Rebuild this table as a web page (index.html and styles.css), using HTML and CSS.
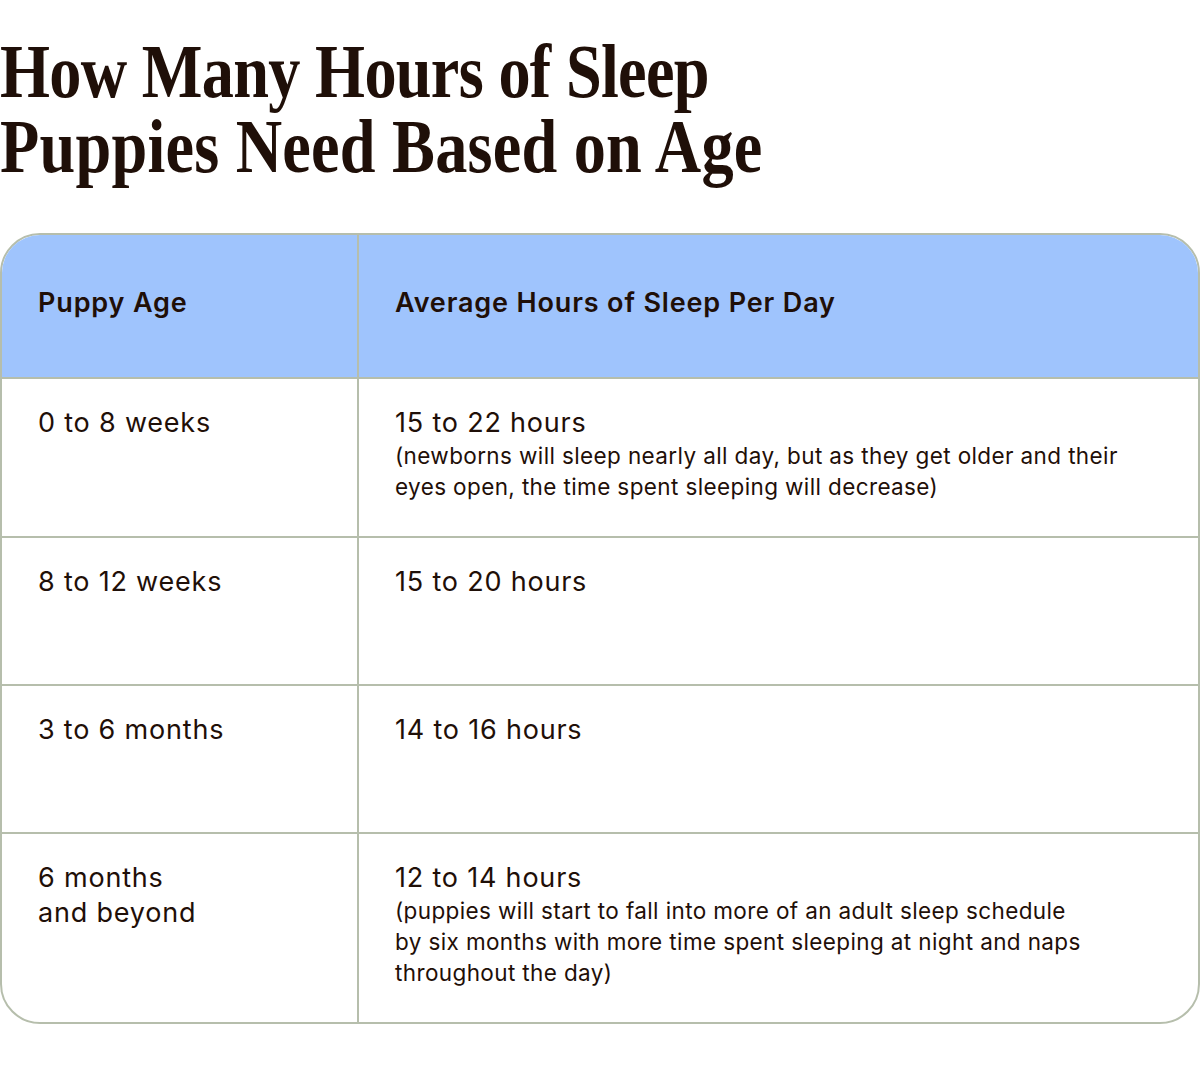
FILE: index.html
```html
<!DOCTYPE html>
<html>
<head>
<meta charset="utf-8">
<link rel="stylesheet" href="styles.css">
</head>
<body>
<div class="page">
  <h1 class="title"><span class="title-inner"><span class="line line-one">How Many Hours of Sleep</span><span class="line line-two">Puppies Need Based on Age</span></span></h1>
  <div class="table">
    <div class="cell head first">Puppy Age</div>
    <div class="cell head">Average Hours of Sleep Per Day</div>

    <div class="cell first"><div class="main">0 to 8 weeks</div></div>
    <div class="cell"><div class="main">15 to 22 hours</div><div class="sub">(newborns will sleep nearly all day, but as they get older and their<br>eyes open, the time spent sleeping will decrease)</div></div>

    <div class="cell first"><div class="main">8 to 12 weeks</div></div>
    <div class="cell"><div class="main">15 to 20 hours</div></div>

    <div class="cell first"><div class="main">3 to 6 months</div></div>
    <div class="cell"><div class="main">14 to 16 hours</div></div>

    <div class="cell first last"><div class="main">6 months<br>and beyond</div></div>
    <div class="cell last"><div class="main">12 to 14 hours</div><div class="sub">(puppies will start to fall into more of an adult sleep schedule<br>by six months with more time spent sleeping at night and naps<br>throughout the day)</div></div>
  </div>
</div>
</body>
</html>
```

FILE: styles.css
```css
html, body {
  margin: 0;
  padding: 0;
  background: #ffffff;
}
body {
  color: #1f0f08;
  font-family: Inter, "Liberation Sans", sans-serif;
}
.page {
  width: 1200px;
  padding-top: 34px;
}
.title {
  margin: 0 0 49px 0;
  font-family: "Liberation Serif", serif;
  font-weight: 700;
  font-size: 77px;
  line-height: 75px;
  white-space: nowrap;
  height: 150px;
}
.title-inner {
  display: inline-block;
  transform: scaleX(0.835);
  transform-origin: left top;
}
.line {
  display: block;
}
.line-one {
  letter-spacing: -0.85px;
}
.line-two {
  letter-spacing: 0.25px;
}
.table {
  display: grid;
  grid-template-columns: 357px 1fr;
  border: 2px solid #b6beac;
  border-radius: 40px;
  overflow: hidden;
}
.cell {
  padding: 26px 36px 34px 36px;
  min-height: 86px;
  border-top: 2px solid #b6beac;
  white-space: nowrap;
}
.cell.first {
  border-right: 2px solid #b6beac;
}
.cell.head {
  border-top: none;
  background: #9fc4fd;
  font-weight: 600;
  font-size: 27px;
  letter-spacing: 0.85px;
  line-height: 36px;
  height: 142px;
  min-height: 0;
  box-sizing: border-box;
  padding-top: 50px;
}
.main {
  font-size: 27px;
  letter-spacing: 0.8px;
  line-height: 35px;
}
.sub {
  font-size: 22.5px;
  letter-spacing: 0.38px;
  line-height: 31px;
}
```
